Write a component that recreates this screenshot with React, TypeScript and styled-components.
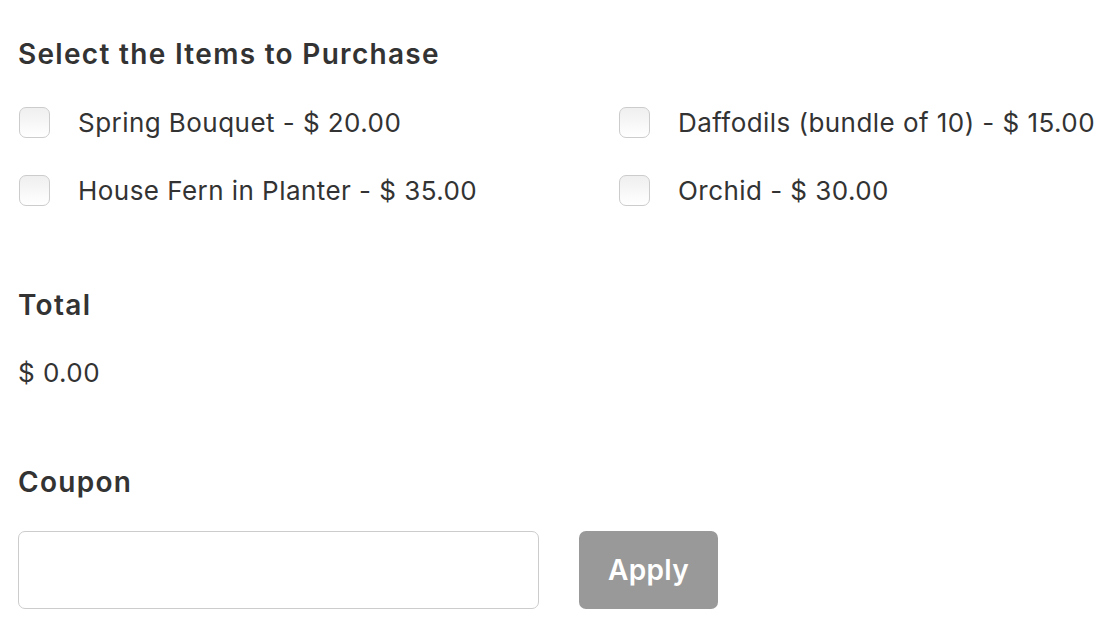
import styled, { createGlobalStyle } from "styled-components";

const GlobalStyle = createGlobalStyle`
  body {
    margin: 0;
    background: #ffffff;
    font-family: Inter, "Liberation Sans", Arial, sans-serif;
    color: #333333;
  }
`;

const Form = styled.div`
  padding: 34px 18px 0 18px;
`;

const Field = styled.div<{ gap?: number }>`
  margin-bottom: ${(p) => p.gap ?? 0}px;
`;

const FieldLabel = styled.div`
  font-size: 28px;
  font-weight: 600;
  letter-spacing: 1.3px;
  line-height: 40px;
  color: #333333;
  margin-bottom: 29px;
`;

const ChoiceGrid = styled.div`
  display: grid;
  grid-template-columns: 600px 1fr;
  row-gap: 30px;
`;

const Choice = styled.label`
  display: flex;
  align-items: center;
  gap: 28px;
  height: 38px;
  white-space: nowrap;
`;

const Box = styled.span`
  box-sizing: border-box;
  width: 31px;
  height: 31px;
  margin-left: 1px;
  border: 1.5px solid #cccccc;
  border-radius: 7px;
  background: linear-gradient(#efefef, #ffffff);
  flex-shrink: 0;
`;

const ChoiceText = styled.span`
  font-size: 26px;
  letter-spacing: 0.45px;
  color: #333333;
`;

const Amount = styled.div`
  font-size: 26px;
  letter-spacing: 0.45px;
  line-height: 38px;
  color: #333333;
`;

const CouponRow = styled.div`
  display: flex;
  align-items: center;
  gap: 40px;
`;

const CouponInput = styled.input`
  box-sizing: border-box;
  width: 521px;
  height: 78px;
  border: 1.5px solid #cccccc;
  border-radius: 7px;
  background: #ffffff;
  outline: none;
  font-size: 26px;
  padding: 0 16px;
`;

const ApplyButton = styled.button`
  box-sizing: border-box;
  width: 139px;
  height: 78px;
  border: none;
  border-radius: 7px;
  background: #999999;
  color: #ffffff;
  font-family: inherit;
  font-size: 28px;
  font-weight: 600;
  letter-spacing: 0.3px;
  cursor: pointer;
`;

const items = [
  "Spring Bouquet - $ 20.00",
  "Daffodils (bundle of 10) - $ 15.00",
  "House Fern in Planter - $ 35.00",
  "Orchid - $ 30.00",
];

export default function App() {
  return (
    <>
      <GlobalStyle />
      <Form>
        <Field gap={76}>
          <FieldLabel>Select the Items to Purchase</FieldLabel>
          <ChoiceGrid>
            {items.map((item) => (
              <Choice key={item}>
                <Box />
                <ChoiceText>{item}</ChoiceText>
              </Choice>
            ))}
          </ChoiceGrid>
        </Field>
        <Field gap={70}>
          <FieldLabel>Total</FieldLabel>
          <Amount>$ 0.00</Amount>
        </Field>
        <Field>
          <FieldLabel>Coupon</FieldLabel>
          <CouponRow>
            <CouponInput type="text" />
            <ApplyButton>Apply</ApplyButton>
          </CouponRow>
        </Field>
      </Form>
    </>
  );
}
